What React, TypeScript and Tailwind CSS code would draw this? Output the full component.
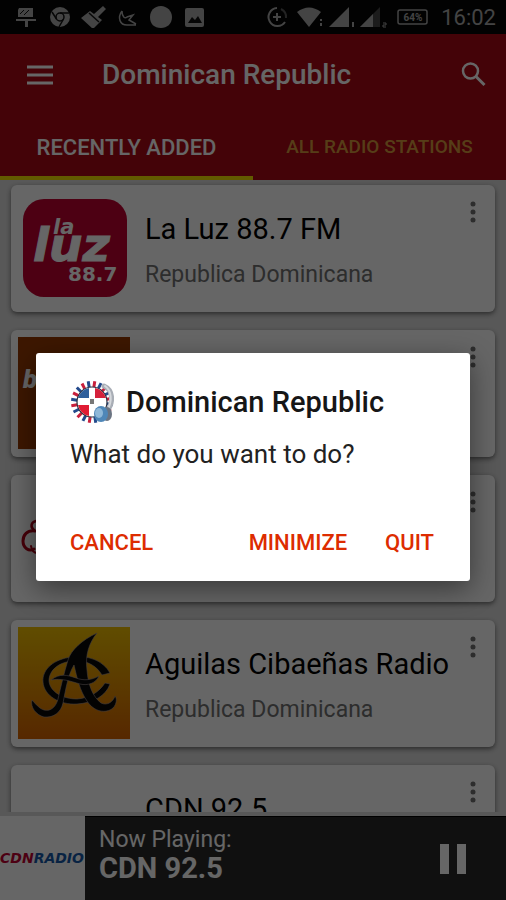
import type { ReactNode } from 'react';

type Station = {
    name: string;
    country: string;
    logo: ReactNode;
};

function LaLuzLogo() {
    return (
        <svg viewBox="0 0 112 112" className="size-28" aria-hidden="true">
            <rect x="5" y="7" width="104" height="98" rx="21" fill="#c00030" />
            <g fill="#fff" fontFamily="'DejaVu Sans', sans-serif" fontWeight="700">
                <text x="35" y="42" fontSize="21" fontStyle="italic">la</text>
                <text x="15" y="69" fontSize="47" fontStyle="italic" stroke="#fff" strokeWidth="1">luz</text>
                <text x="50" y="89" fontSize="20">88.7</text>
            </g>
        </svg>
    );
}

function OrangeLogo() {
    return (
        <svg viewBox="0 0 112 112" className="size-28" aria-hidden="true">
            <rect width="112" height="112" fill="#9a3b00" />
            <text x="5" y="51" fontSize="26" fontFamily="Roboto, sans-serif" fontWeight="900" fontStyle="italic" fill="#fff">b</text>
        </svg>
    );
}

function ScriptLogo() {
    return (
        <svg viewBox="0 0 112 112" className="size-28" aria-hidden="true">
            <g fill="none" stroke="#b00018" strokeLinecap="round">
                <path d="M17 49 C9 48 5 53 5 59 C5 66 11 70 16 67" strokeWidth="3" />
                <path d="M18 39 C13 40 12 45 16 48" strokeWidth="2.500" />
                <path d="M13 64 C14 69 16 71 19 71" strokeWidth="2" />
            </g>
        </svg>
    );
}

function AguilasLogo() {
    return (
        <svg viewBox="0 0 112 112" className="size-28" aria-hidden="true">
            <defs>
                <linearGradient id="aguilas" x1="0" y1="0" x2="0" y2="1">
                    <stop offset="0" stopColor="#f0c000" />
                    <stop offset="1" stopColor="#d86400" />
                </linearGradient>
            </defs>
            <rect width="112" height="112" fill="url(#aguilas)" />
            <g fill="#080808" stroke="#a99" strokeWidth="0.6">
                <path d="M92 46 C85 33 69 28 54 30 C36 32 24 42 25 55 C26 69 42 78 59 77 C75 76 88 69 92 57 L87 56 C81 65 72 71 59 72 C45 72 32 65 31 54 C31 43 41 35 55 34 C68 33 78 38 84 48 Z" />
                <path d="M79 6 C64 13 53 23 50 33 C46 46 43 59 40 72 C37 83 29 86 22 81 C18 78 16 75 14 73 C12 80 18 88 26 90 C36 91 43 85 45 76 C48 61 50 48 56 38 C59 51 62 64 69 74 C76 85 88 87 95 81 C99 77 99 71 97 69 C95 75 89 79 83 76 C75 70 70 58 69 43 C67 28 71 16 79 6 Z" />
                <path d="M33 53 C42 46 49 48 58 51 C66 54 74 53 81 49 C78 56 70 59 62 57 C52 54 43 51 33 53 Z" />
            </g>
        </svg>
    );
}

function DominicanBadge() {
    const ticks = Array.from({ length: 20 }, (_, i) => i);

    return (
        <svg viewBox="0 0 44 44" className="size-11" aria-hidden="true">
            {ticks.map((i) => (
                <rect
                    key={i}
                    x="20"
                    y="1"
                    width="3"
                    height="6"
                    fill={i % 2 === 0 ? '#c8203c' : '#234a8c'}
                    transform={`rotate(${i * 18 + 9} 22 22)`}
                />
            ))}
            <circle cx="22" cy="22" r="15" fill="#fff" stroke="#2b3040" strokeWidth="1.2" />
            <path d="M19 18 H8 A14.500 14.500 0 0 1 19 8 Z" fill="#2f5f9c" />
            <path d="M25 18 H36 A14.500 14.500 0 0 0 25 8 Z" fill="#d5213b" />
            <path d="M19 25 H8 A14.500 14.500 0 0 0 19 36 Z" fill="#e01c34" />
            <rect x="20" y="19" width="4" height="5" fill="#777" />
            <path d="M34 6 C43 10 44 22 37 31" fill="none" stroke="#a9aeb6" strokeWidth="5" strokeLinecap="round" />
            <path d="M35 6 C42 11 42 21 38 29" fill="none" stroke="#d6d9dd" strokeWidth="2" strokeLinecap="round" />
            <ellipse cx="37" cy="34" rx="5" ry="7" fill="#6b7482" />
            <ellipse cx="31" cy="34" rx="7" ry="8" fill="#4f87b8" />
            <ellipse cx="29" cy="33" rx="4" ry="5" fill="#8fb8d8" />
        </svg>
    );
}

function StatusBar() {
    return (
        <div className="flex h-[34px] shrink-0 items-center justify-between bg-[#050505] pl-4 pr-[10px] text-[#aaa]">
            <svg viewBox="0 0 190 22" className="h-[22px] w-[190px]" fill="currentColor" aria-hidden="true">
                <path d="M3 2 H17 V11 H2 V4 Z M0 13 H20 V15 H12 V21 H9 V15 H0 Z" />
                <path d="M4 8 L8 4 M8 9 L13 4" stroke="#111" strokeWidth="1" />
                <circle cx="44" cy="11" r="10" />
                <circle cx="44" cy="11" r="4" fill="none" stroke="#111" strokeWidth="1.500" />
                <path d="M44 7 H53 M40.500 13 L36 6 M47.500 13 L43 21" stroke="#111" strokeWidth="1.500" />
                <path d="M87 0 L90 3 L82 11 L86 14 L77 23 L65 12 L74 5 L78 8 Z" />
                <path d="M73 7 L83 16" stroke="#111" strokeWidth="1.500" />
                <path d="M106 5 C101 12 104 19 111 19 H120 M106 5 C106 11 109 13 111 11 L117 9 L113 14 L120 18" fill="none" stroke="currentColor" strokeWidth="1.500" />
                <path d="M145 0 C151 0 156 5 156 11 C156 18 151 22 145 22 C138 22 134 18 134 11 C134 5 138 0 145 0 Z" />
                <rect x="169" y="2" width="19" height="19" rx="2" />
                <path d="M172 17 L176 11 L179 14 L182 10 L186 17 Z" fill="#111" />
            </svg>
            <div className="flex items-center gap-2.5">
                <svg viewBox="0 0 164 22" className="h-[22px] w-[164px]" fill="currentColor" aria-hidden="true">
                    <path d="M10 2 A9 9 0 1 0 18 16" fill="none" stroke="currentColor" strokeWidth="2" />
                    <path d="M14 3 A9 9 0 0 1 19 12" fill="none" stroke="currentColor" strokeWidth="2" opacity="0.5" />
                    <path d="M10 7 V15 M6 11 H14" stroke="currentColor" strokeWidth="2" />
                    <path d="M30 6 Q42 -3 54 6 L42 21 Z" />
                    <path d="M54 13 V15 M54 17 V20" stroke="currentColor" strokeWidth="2" />
                    <path d="M82 1 V21 H62 Z" />
                    <path d="M86 16 V21" stroke="currentColor" strokeWidth="2" />
                    <path d="M113 1 V21 H93 Z" opacity="0.4" />
                    <path d="M106 8 V21 H93 Z" />
                    <path d="M116 17 H119 V19 H116 V21 H119" fill="none" stroke="currentColor" strokeWidth="1" />
                    <rect x="131" y="4" width="29" height="14" rx="2" fill="none" stroke="currentColor" strokeWidth="1.500" />
                    <text x="146" y="15" textAnchor="middle" fontSize="10" fontFamily="Roboto, sans-serif" fontWeight="700">64%</text>
                </svg>
                <span className="text-[22px]">16:02</span>
            </div>
        </div>
    );
}

function Header() {
    return (
        <header className="shrink-0 bg-[#aa0814] font-medium text-white">
            <div className="flex h-[82px] items-center px-5">
                <button type="button" aria-label="Menu" className="flex size-10 items-center justify-center">
                    <svg viewBox="0 0 26 20" className="h-5 w-[26px]" aria-hidden="true">
                        <path d="M0 2 H26 M0 10 H26 M0 18 H26" stroke="currentColor" strokeWidth="3" />
                    </svg>
                </button>
                <h1 className="ml-[42px] flex-1 text-[28px]">Dominican Republic</h1>
                <button type="button" aria-label="Search" className="-mr-2 flex size-10 items-center justify-center">
                    <svg viewBox="0 0 26 26" className="size-[26px]" fill="none" stroke="currentColor" strokeWidth="2.500" aria-hidden="true">
                        <circle cx="9.500" cy="9" r="7.500" />
                        <path d="M15 14.500 L23.500 23" strokeWidth="3" />
                    </svg>
                </button>
            </div>
            <nav className="flex h-16">
                <button type="button" className="flex-1 border-b-4 border-[#f4e400] pt-0.5 text-[22px]">RECENTLY ADDED</button>
                <button type="button" className="flex-1 border-b-4 border-transparent pt-0.5 text-[19px] text-[#d69a3c]">ALL RADIO STATIONS</button>
            </nav>
        </header>
    );
}

function StationCard({ station }: { station: Station }) {
    return (
        <li className="flex h-[127px] shrink-0 rounded-md bg-white p-[7px] shadow-[0_2px_5px_rgba(0,0,0,0.5)]">
            <div className="size-28 shrink-0">{station.logo}</div>
            <div className="ml-[15px] min-w-0 flex-1 pt-[19px]">
                <h2 className="whitespace-nowrap text-[29px] leading-9 text-black">{station.name}</h2>
                <p className="mt-3.5 text-[23px] leading-7 text-[#707070]">{station.country}</p>
            </div>
            <button type="button" aria-label={`Options for ${station.name}`} className="flex h-10 w-[30px] items-center justify-center text-[#707070]">
                <svg viewBox="0 0 6 22" className="h-[22px] w-[6px]" fill="currentColor" aria-hidden="true">
                    <circle cx="3" cy="3" r="2.500" />
                    <circle cx="3" cy="11" r="2.500" />
                    <circle cx="3" cy="19" r="2.500" />
                </svg>
            </button>
        </li>
    );
}

function Player() {
    return (
        <footer className="flex h-[84px] shrink-0 bg-[#282828] text-white">
            <div className="flex w-[85px] items-center justify-center bg-white">
                <svg viewBox="0 0 85 20" className="h-5 w-[85px]" aria-hidden="true">
                    <text x="0" y="15" fontSize="14" fontFamily="'DejaVu Sans', sans-serif" fontWeight="700" fontStyle="italic" fill="#c00030">
                        CDN<tspan fill="#1659a8">RADIO</tspan>
                    </text>
                </svg>
            </div>
            <div className="min-w-0 flex-1 border-t border-black pl-3.5 pt-[9px]">
                <p className="text-[23px] leading-7">Now Playing:</p>
                <p className="text-[29px] font-bold leading-7">CDN 92.5</p>
            </div>
            <button type="button" aria-label="Pause" className="flex w-[106px] items-center justify-center border-t border-black">
                <svg viewBox="0 0 26 30" className="h-[30px] w-[26px]" fill="currentColor" aria-hidden="true">
                    <path d="M0 0 H9 V30 H0 Z M17 0 H26 V30 H17 Z" />
                </svg>
            </button>
        </footer>
    );
}

function QuitDialog() {
    return (
        <div className="absolute inset-0 flex items-center bg-black/60 px-9 pt-[34px]">
            <div role="dialog" aria-modal="true" aria-labelledby="dialog-title" className="w-full rounded-[3px] bg-white px-[34px] pb-[17px] pt-[27px] shadow-[0_8px_28px_rgba(0,0,0,0.45)]">
                <div className="flex items-center gap-3">
                    <DominicanBadge />
                    <h2 id="dialog-title" className="text-[29px] font-medium leading-11 text-[#161616]">Dominican Republic</h2>
                </div>
                <p className="mt-3 text-[26px] leading-9 text-[#222]">What do you want to do?</p>
                <div className="mt-12 flex h-11 items-center pr-0.5 text-[22px] font-medium text-[#dd2c00]">
                    <button type="button">CANCEL</button>
                    <button type="button" className="ml-auto">MINIMIZE</button>
                    <button type="button" className="ml-[38px]">QUIT</button>
                </div>
            </div>
        </div>
    );
}

const stations: Station[] = [
    { name: 'La Luz 88.7 FM', country: 'Republica Dominicana', logo: <LaLuzLogo /> },
    { name: '', country: '', logo: <OrangeLogo /> },
    { name: '', country: '', logo: <ScriptLogo /> },
    { name: 'Aguilas Cibaeñas Radio', country: 'Republica Dominicana', logo: <AguilasLogo /> },
    { name: 'CDN 92.5', country: '', logo: null },
];

export default function App() {
    return (
        <div className="relative flex h-screen flex-col overflow-hidden bg-[#dcdcdc] font-[Roboto,sans-serif]">
            <StatusBar />
            <Header />
            <main className="min-h-0 flex-1 pb-1">
                <ul className="flex h-full flex-col gap-[18px] overflow-hidden px-[11px] pt-[5px]">
                    {stations.map((station, index) => (
                        <StationCard key={index} station={station} />
                    ))}
                </ul>
            </main>
            <Player />
            <QuitDialog />
        </div>
    );
}
